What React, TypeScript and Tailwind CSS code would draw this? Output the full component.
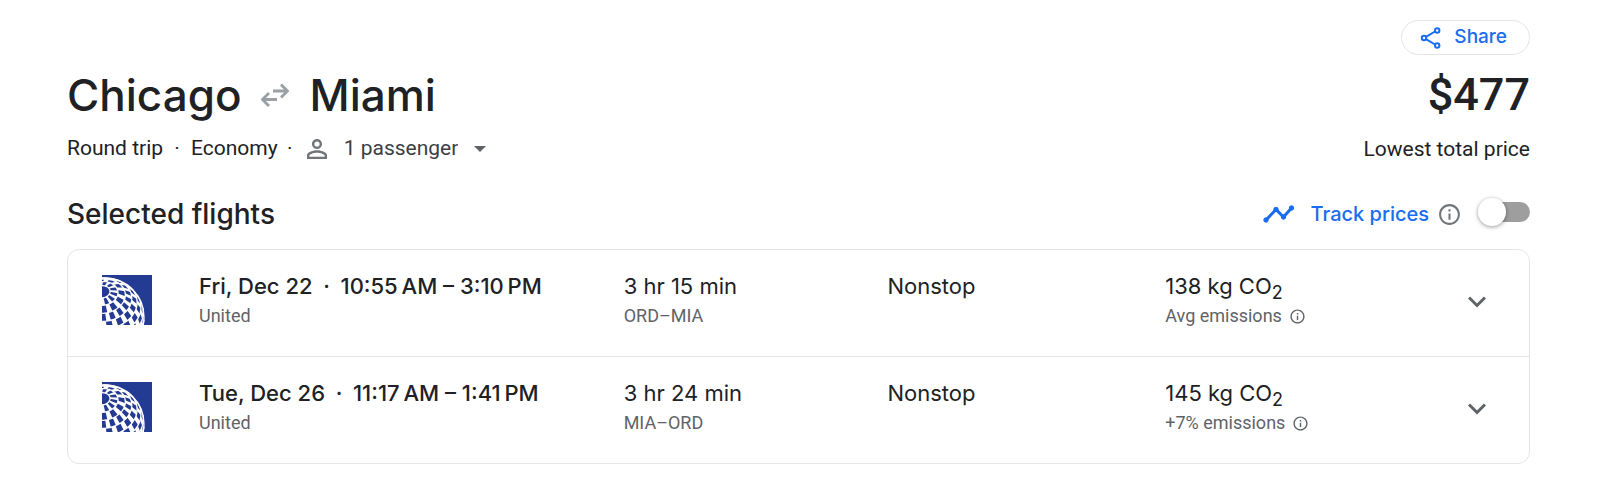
import { useState } from "react";

const flights = [
  {
    id: "out",
    date: "Fri, Dec 22",
    time: "10:55\u202fAM – 3:10\u202fPM",
    airline: "United",
    duration: "3 hr 15 min",
    route: "ORD–MIA",
    stops: "Nonstop",
    co2: "138 kg CO",
    emissions: "Avg emissions",
  },
  {
    id: "back",
    date: "Tue, Dec 26",
    time: "11:17\u202fAM – 1:41\u202fPM",
    airline: "United",
    duration: "3 hr 24 min",
    route: "MIA–ORD",
    stops: "Nonstop",
    co2: "145 kg CO",
    emissions: "+7% emissions",
  },
];

// Globe seen from the side, with its pole tilted towards the viewer
const globe = { x: 3, y: 42, r: 39 };
const pole = [-0.08, -0.66, Math.sqrt(1 - 0.08 ** 2 - 0.66 ** 2)];
const len = Math.hypot(pole[2], pole[0]);
const axisU = [pole[2] / len, 0, -pole[0] / len];
const axisV = [
  pole[1] * axisU[2] - pole[2] * axisU[1],
  pole[2] * axisU[0] - pole[0] * axisU[2],
  pole[0] * axisU[1] - pole[1] * axisU[0],
];
const BAND = 12;

function project(colat: number, lon: number) {
  const t = (colat * Math.PI) / 180;
  const l = (lon * Math.PI) / 180;
  const [x, y, z] = [0, 1, 2].map(
    (i) =>
      Math.cos(t) * pole[i] + Math.sin(t) * (Math.cos(l) * axisU[i] + Math.sin(l) * axisV[i])
  );
  return { x: globe.x + globe.r * x, y: globe.y + globe.r * y, z };
}

function buildRings() {
  let d = "";
  for (let colat = BAND; colat <= 132; colat += BAND) {
    let pen = "M";
    for (let lon = 0; lon <= 360; lon += 4) {
      const p = project(colat, lon);
      if (p.z < 0) {
        pen = "M";
        continue;
      }
      d += `${pen}${p.x.toFixed(1)} ${p.y.toFixed(1)}`;
      pen = "L";
    }
  }
  return d;
}

function buildBlocks() {
  let d = "";
  for (let band = 1; band < 10; band++) {
    const step = band < 3 ? 30 : 20;
    const width = step * 0.45;
    for (let lon = (band % 2) * (step / 2); lon < 360; lon += step) {
      const top = band * BAND;
      const corners = [
        project(top, lon),
        project(top, lon + width),
        project(top + BAND, lon + width),
        project(top + BAND, lon),
      ];
      if (corners.some((p) => p.z < 0)) continue;
      d += `M${corners.map((p) => `${p.x.toFixed(1)} ${p.y.toFixed(1)}`).join("L")}Z`;
    }
  }
  return d;
}

const rings = buildRings();
const blocks = buildBlocks();

function UnitedLogo() {
  return (
    <svg viewBox="0 0 50 50" className="size-[50px]" role="img" aria-label="United">
      <rect width="50" height="50" fill="#233b93" />
      <path d={blocks} fill="#fff" />
      <path d={rings} fill="none" stroke="#fff" strokeWidth="1.300" />
      <circle cx={globe.x} cy={globe.y} r={globe.r} fill="none" stroke="#fff" strokeWidth="1.300" />
    </svg>
  );
}

function InfoIcon({ className }: { className: string }) {
  return (
    <svg viewBox="0 0 24 24" fill="currentColor" className={className} aria-hidden="true">
      <path d="M11 7h2v2h-2zm0 4h2v6h-2zm1-9C6.48 2 2 6.48 2 12s4.48 10 10 10 10-4.48 10-10S17.52 2 12 2zm0 18c-4.41 0-8-3.59-8-8s3.59-8 8-8 8 3.59 8 8-3.59 8-8 8z" />
    </svg>
  );
}

export default function App() {
  const [tracking, setTracking] = useState(false);
  const [passengers, setPassengers] = useState("1");

  return (
    <main className="bg-white pt-5 pb-8 pl-[67px] pr-[70px] font-['Roboto',sans-serif] text-[#202124]">
      <div className="flex justify-end">
        <button className="flex h-[35px] items-center gap-3 rounded-full border border-[#e3e5e8] pl-[18px] pr-[22px] font-['Inter',sans-serif] text-[19px] font-medium text-[#1a6cf0]">
          <svg viewBox="0 0 22 22" className="size-[22px]" fill="none" stroke="currentColor" strokeWidth="2" aria-hidden="true">
            <path d="M6 9.800 15 4.500M6 12.200l9 5.300" />
            <circle cx="4" cy="11" r="2.200" />
            <circle cx="17.200" cy="3.500" r="2.200" />
            <circle cx="17.200" cy="18.500" r="2.200" />
          </svg>
          Share
        </button>
      </div>

      <header className="mt-3 flex items-start justify-between">
        <div>
          <h1 className="flex items-center gap-5 font-['Inter',sans-serif] text-[44px] leading-14 font-medium">
            Chicago
            <svg viewBox="0 0 28 24" className="h-6 w-7" fill="none" stroke="#9aa0a6" strokeWidth="2.800" role="img" aria-label="to and from">
              <path d="M12 8h14M20 1.500 26.500 8 20 14.500M16 16.500H2M8 10l-6.500 6.500L8 23" />
            </svg>
            Miami
          </h1>
          <div className="mt-3 flex h-7 items-center text-[21px]">
            <span>Round trip</span>
            <span className="w-7 text-center">·</span>
            <span>Economy</span>
            <span className="w-6 text-center">·</span>
            <svg viewBox="0 0 24 24" className="size-[30px]" fill="#70757a" aria-hidden="true">
              <path d="M12 5.900a2.100 2.100 0 1 1 0 4.200 2.100 2.100 0 0 1 0-4.200m0 9c2.970 0 6.100 1.460 6.100 2.100v1.100H5.900V17c0-.640 3.130-2.100 6.100-2.100M12 4C9.790 4 8 5.790 8 8s1.790 4 4 4 4-1.790 4-4-1.790-4-4-4zm0 9c-2.670 0-8 1.340-8 4v3h16v-3c0-2.660-5.330-4-8-4z" />
            </svg>
            <div className="relative ml-3 flex items-center">
              <select
                aria-label="Passengers"
                value={passengers}
                onChange={(e) => setPassengers(e.target.value)}
                className="appearance-none bg-transparent pr-7 text-[#3c4043] [field-sizing:content]"
              >
                <option value="1">1 passenger</option>
                <option value="2">2 passengers</option>
                <option value="3">3 passengers</option>
              </select>
              <svg viewBox="0 0 12 6" className="pointer-events-none absolute right-0 h-1.5 w-3" fill="#5f6368" aria-hidden="true">
                <path d="M0 0h12L6 6z" />
              </svg>
            </div>
          </div>
        </div>
        <div className="text-right">
          <p className="text-[45px] leading-14 font-medium">$477</p>
          <p className="mt-3 text-[21px] leading-7">Lowest total price</p>
        </div>
      </header>

      <section>
        <div className="mt-8 flex h-[38px] items-center justify-between">
          <h2 className="font-['Inter',sans-serif] text-[28px] font-medium">Selected flights</h2>
          <div className="flex items-center">
            <svg viewBox="0 0 32 20" className="h-5 w-8" fill="#1a6cf0" stroke="#1a6cf0" aria-hidden="true">
              <path d="m3 16 10-10.500L20.500 13 28.500 4" fill="none" strokeWidth="3" />
              <circle cx="3" cy="16" r="2.200" />
              <circle cx="13" cy="5.500" r="2.200" />
              <circle cx="20.500" cy="13" r="2.200" />
              <circle cx="28.500" cy="4" r="2.200" />
            </svg>
            <label htmlFor="track" className="ml-4 font-['Inter',sans-serif] text-xl font-medium text-[#1a6cf0]">
              Track prices
            </label>
            <button aria-label="About price tracking" className="ml-2 text-[#70757a]">
              <InfoIcon className="size-[25px]" />
            </button>
            <input
              id="track"
              type="checkbox"
              role="switch"
              checked={tracking}
              onChange={(e) => setTracking(e.target.checked)}
              className="relative mb-1 ml-5 h-5 w-12 appearance-none rounded-full bg-[#9e9e9e] before:absolute before:-top-1 before:-left-1 before:size-7 before:rounded-full before:bg-white before:shadow-[0_1px_4px_rgba(0,0,0,0.4)] before:transition-transform checked:bg-[#8ab4f8] checked:before:translate-x-6"
            />
          </div>
        </div>

        <ul className="mt-4 divide-y divide-[#e3e5e8] rounded-xl border border-[#e3e5e8]">
          {flights.map((flight) => (
            <li
              key={flight.id}
              className="grid grid-cols-[97px_425fr_264fr_278fr_294fr_36px] items-start px-[34px] pt-5 pb-[26px]"
            >
              <div className="pt-[5px]">
                <UnitedLogo />
              </div>
              <div>
                <p className="flex font-['Inter',sans-serif] text-[22px] leading-8 font-medium">
                  {flight.date}
                  <span className="w-7 text-center">·</span>
                  {flight.time}
                </p>
                <p className="text-lg leading-7 text-[#5f6368]">{flight.airline}</p>
              </div>
              <div>
                <p className="font-['Inter',sans-serif] text-[22px] leading-8">{flight.duration}</p>
                <p className="text-lg leading-7 text-[#5f6368]">{flight.route}</p>
              </div>
              <p className="font-['Inter',sans-serif] text-[22px] leading-8">{flight.stops}</p>
              <div>
                <p className="font-['Inter',sans-serif] text-[22px] leading-8">
                  {flight.co2}
                  <sub className="text-lg leading-none">2</sub>
                </p>
                <p className="flex items-center text-lg leading-7 text-[#5f6368]">
                  {flight.emissions}
                  <button aria-label="About emissions" className="ml-[7px]">
                    <InfoIcon className="size-[17px]" />
                  </button>
                </p>
              </div>
              <button aria-label="Flight details" className="mt-3.5 flex size-9 items-center justify-center">
                <svg viewBox="0 0 18 12" className="h-3 w-[18px]" fill="none" stroke="#5f6368" strokeWidth="3" aria-hidden="true">
                  <path d="m1 1.500 8 8 8-8" />
                </svg>
              </button>
            </li>
          ))}
        </ul>
      </section>
    </main>
  );
}
